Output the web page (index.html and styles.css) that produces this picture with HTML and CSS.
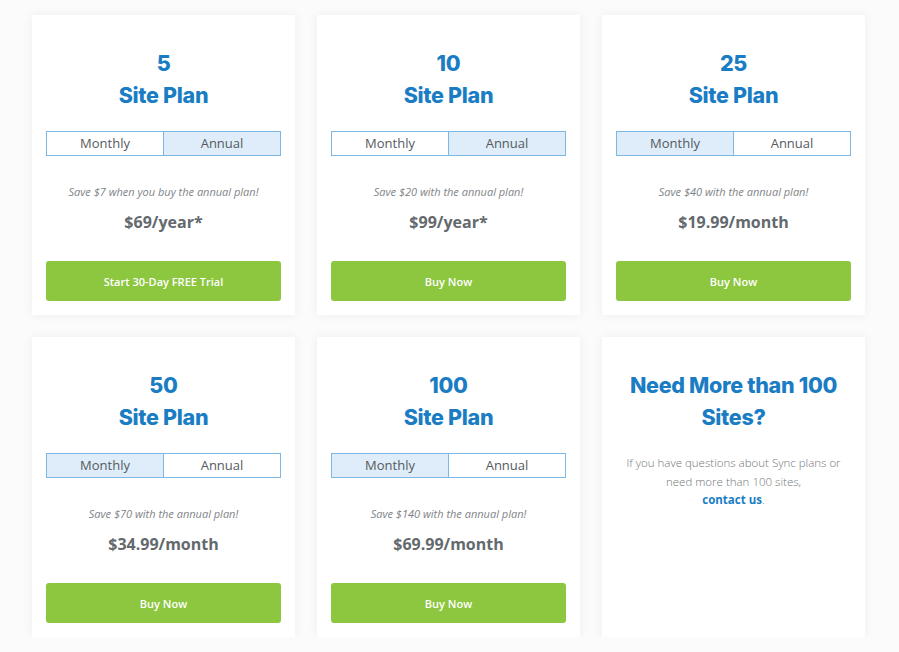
FILE: index.html
```html
<!DOCTYPE html>
<html>
<head>
<meta charset="utf-8">
<link rel="stylesheet" href="styles.css">
</head>
<body>
<div class="grid">
  <div class="card">
    <h2 class="title">5<br>Site Plan</h2>
    <div class="toggle"><span>Monthly</span><span class="on">Annual</span></div>
    <p class="save">Save $7 when you buy the annual plan!</p>
    <p class="price">$69/year*</p>
    <a class="btn">Start 30-Day FREE Trial</a>
  </div>
  <div class="card">
    <h2 class="title">10<br>Site Plan</h2>
    <div class="toggle"><span>Monthly</span><span class="on">Annual</span></div>
    <p class="save">Save $20 with the annual plan!</p>
    <p class="price">$99/year*</p>
    <a class="btn">Buy Now</a>
  </div>
  <div class="card">
    <h2 class="title">25<br>Site Plan</h2>
    <div class="toggle"><span class="on">Monthly</span><span>Annual</span></div>
    <p class="save">Save $40 with the annual plan!</p>
    <p class="price">$19.99/month</p>
    <a class="btn">Buy Now</a>
  </div>
  <div class="card">
    <h2 class="title">50<br>Site Plan</h2>
    <div class="toggle"><span class="on">Monthly</span><span>Annual</span></div>
    <p class="save">Save $70 with the annual plan!</p>
    <p class="price">$34.99/month</p>
    <a class="btn">Buy Now</a>
  </div>
  <div class="card">
    <h2 class="title">100<br>Site Plan</h2>
    <div class="toggle"><span class="on">Monthly</span><span>Annual</span></div>
    <p class="save">Save $140 with the annual plan!</p>
    <p class="price">$69.99/month</p>
    <a class="btn">Buy Now</a>
  </div>
  <div class="card">
    <h2 class="title">Need More than 100<br>Sites?</h2>
    <p class="info">If you have questions about Sync plans or<br>need more than 100 sites,<br><a class="link">contact us</a>.</p>
  </div>
</div>
</body>
</html>
```
FILE: styles.css
```css
* { box-sizing: border-box; }
html, body { margin: 0; padding: 0; background: #fbfbfb; }
body { font-family: "Open Sans", "Liberation Sans", sans-serif; }
.grid {
  display: grid;
  grid-template-columns: repeat(3, 263px);
  column-gap: 22px;
  row-gap: 22px;
  padding: 15px 0 0 32px;
}
.card {
  background: #fff;
  height: 300px;
  padding: 32px 14px 14px;
  display: flex;
  flex-direction: column;
  align-items: stretch;
  box-shadow: 0 0 10px rgba(0,0,0,0.06);
}
.title {
  margin: 0;
  font-family: "Inter", "Liberation Sans", sans-serif;
  font-weight: 800;
  font-size: 21.5px;
  line-height: 32px;
  letter-spacing: -0.3px;
  color: #1a7dc4;
  text-align: center;
}
.toggle {
  margin-top: 20px;
  display: flex;
  height: 25px;
  border: 1px solid #7cb8e3;
}
.toggle span {
  flex: 1;
  text-align: center;
  font-size: 13px;
  line-height: 23px;
  color: #555a5f;
}
.toggle span + span { border-left: 1px solid #7cb8e3; }
.toggle span.on { background: #deedf9; }
.save {
  margin: 28px 0 0;
  text-align: center;
  font-size: 11px;
  font-style: italic;
  color: #808488;
  line-height: 16px;
}
.price {
  margin: 11px 0 0;
  text-align: center;
  font-size: 16px;
  font-weight: 700;
  color: #64696e;
  line-height: 22px;
}
.btn {
  margin-top: auto;
  height: 40px;
  border-radius: 3px;
  background: #8dc63f;
  color: #fff;
  font-size: 11px;
  font-weight: 600;
  display: flex;
  align-items: center;
  justify-content: center;
}
.info {
  margin: 21px -6px 0;
  text-align: center;
  font-size: 11.5px;
  font-weight: 300;
  line-height: 18.5px;
  white-space: nowrap;
  color: #72777b;
}
.link { color: #1a7dc4; font-weight: 700; }
```
